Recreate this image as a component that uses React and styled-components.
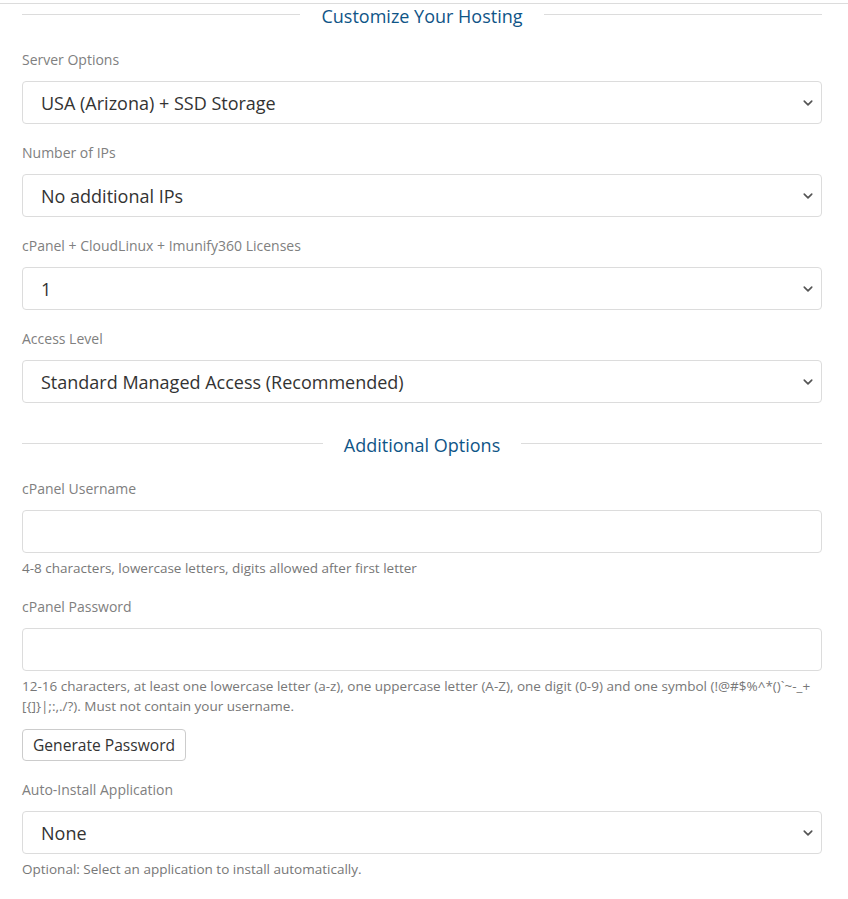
import React from "react";
import styled, { createGlobalStyle } from "styled-components";

const GlobalStyle = createGlobalStyle`
  html, body {
    margin: 0;
    padding: 0;
    background: #fff;
    font-family: "Open Sans", "Noto Sans", Arial, sans-serif;
  }
`;

const ChevronDown = () => (
  <svg width="10" height="10" viewBox="0 0 16 16" aria-hidden="true">
    <path
      d="M2 5l6 6 6-6"
      fill="none"
      stroke="#555"
      strokeWidth="2.6"
      strokeLinecap="round"
      strokeLinejoin="round"
    />
  </svg>
);

const Field = ({ label, children, help, action }) => (
  <Group>
    <Label>{label}</Label>
    {children}
    {help && <Help>{help}</Help>}
    {action}
  </Group>
);

const Select = ({ value }) => (
  <SelectWrap>
    <SelectBox defaultValue={value}>
      <option>{value}</option>
    </SelectBox>
    <Chevron>
      <ChevronDown />
    </Chevron>
  </SelectWrap>
);

const App = () => {
  return (
    <>
      <GlobalStyle />
      <Page>
        <Content>
          <Divider>
            <DividerTitle>Customize Your Hosting</DividerTitle>
          </Divider>

          <Field label="Server Options">
            <Select value="USA (Arizona) + SSD Storage" />
          </Field>
          <Field label="Number of IPs">
            <Select value="No additional IPs" />
          </Field>
          <Field label="cPanel + CloudLinux + Imunify360 Licenses">
            <Select value="1" />
          </Field>
          <Field label="Access Level">
            <Select value="Standard Managed Access (Recommended)" />
          </Field>

          <Divider $spaced>
            <DividerTitle>Additional Options</DividerTitle>
          </Divider>

          <Field
            label="cPanel Username"
            help="4-8 characters, lowercase letters, digits allowed after first letter"
          >
            <Input type="text" />
          </Field>
          <Field
            label="cPanel Password"
            help="12-16 characters, at least one lowercase letter (a-z), one uppercase letter (A-Z), one digit (0-9) and one symbol (!@#$%^*()`~-_+[{]}|;:,./?). Must not contain your username."
            action={<Button type="button">Generate Password</Button>}
          >
            <Input type="text" />
          </Field>
          <Field
            label="Auto-Install Application"
            help="Optional: Select an application to install automatically."
          >
            <Select value="None" />
          </Field>
        </Content>
        <BottomBar>
          <BarSegment $w="117px" $color="#c8c8c8" />
          <BarSegment $w="126px" $color="#071b24" />
          <BarSegment $w="60px" $color="#2b3d47" />
          <BarSegment $grow $color="#071b24" />
        </BottomBar>
      </Page>
    </>
  );
};

export default App;

const Page = styled.div`
  width: 848px;
  margin-top: 3px;
  border-top: 1px solid #dcdcdc;
`;

const Content = styled.div`
  width: 800px;
  margin-left: 22px;
  padding-bottom: 16px;
`;

const Divider = styled.div`
  display: flex;
  align-items: center;
  gap: 21px;
  height: 24px;
  margin-top: ${(p) => (p.$spaced ? "30px" : "0")};
  margin-bottom: 22px;

  &::before,
  &::after {
    content: "";
    flex: 1;
    height: 1px;
    background: #dcdcdc;
    margin-top: -3px;
  }
`;

const DividerTitle = styled.h3`
  margin: 0;
  font-size: 18px;
  font-weight: 400;
  line-height: 24px;
  color: #0f5587;
`;

const Group = styled.div`
  margin-bottom: 19px;
`;

const Label = styled.label`
  display: block;
  font-size: 14px;
  line-height: 20px;
  color: #808080;
  margin-bottom: 11px;
`;

const SelectWrap = styled.div`
  position: relative;
  width: 100%;
`;

const SelectBox = styled.select`
  display: block;
  width: 100%;
  height: 43px;
  padding: 0 36px 0 18px;
  border: 1px solid #dcdcdc;
  border-radius: 4px;
  background: #fff;
  font-family: inherit;
  font-size: 18px;
  color: #333;
  appearance: none;
  -webkit-appearance: none;
  outline: none;
`;

const Chevron = styled.span`
  position: absolute;
  right: 9px;
  top: 50%;
  transform: translateY(-50%);
  display: flex;
  pointer-events: none;
`;

const Input = styled.input`
  display: block;
  box-sizing: border-box;
  width: 100%;
  height: 43px;
  padding: 0 18px;
  border: 1px solid #dcdcdc;
  border-radius: 4px;
  font-family: inherit;
  font-size: 18px;
  color: #333;
  outline: none;
`;

const Help = styled.p`
  margin: 5px 0 0;
  font-size: 13.5px;
  line-height: 20px;
  color: #777;
`;

const Button = styled.button`
  display: block;
  height: 32px;
  margin-top: 13px;
  padding: 0 10px;
  border: 1px solid #ccc;
  border-radius: 4px;
  background: #fff;
  font-family: inherit;
  font-size: 15.6px;
  color: #333;
  cursor: pointer;
`;

const BottomBar = styled.div`
  display: flex;
  height: 2px;
`;

const BarSegment = styled.div`
  width: ${(p) => p.$w || "auto"};
  flex: ${(p) => (p.$grow ? 1 : "none")};
  background: ${(p) => p.$color};
`;
